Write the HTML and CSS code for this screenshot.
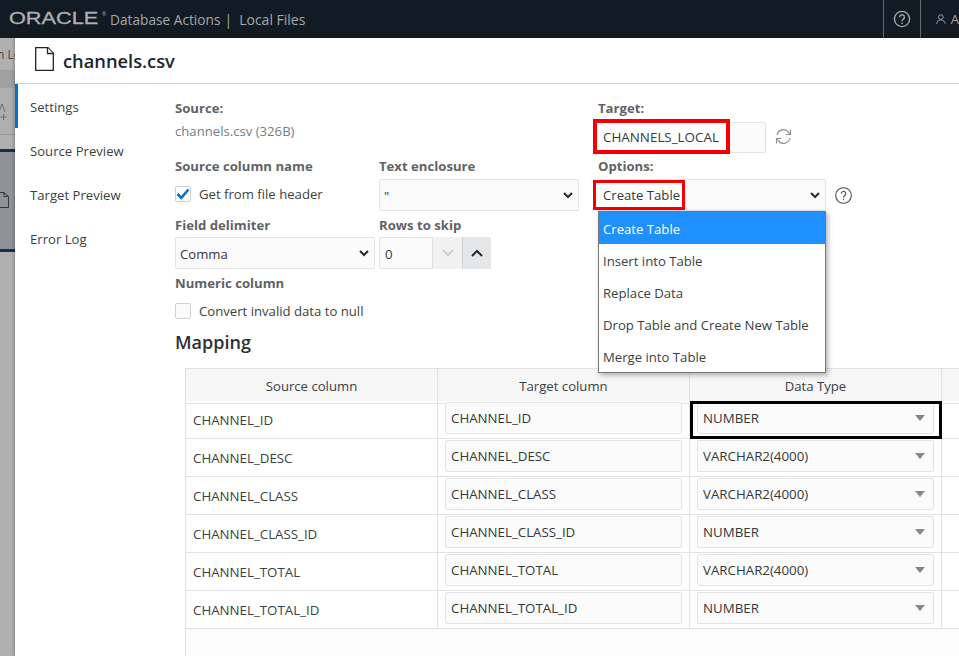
FILE: index.html
```html
<!DOCTYPE html>
<html lang="en">
<head>
<meta charset="utf-8">
<title>Database Actions | Local Files</title>
<link rel="stylesheet" href="styles.css">
</head>
<body>
<header class="topbar">
  <div class="brand">
    <span class="logo">ORACLE</span><span class="reg">®</span>
    <span class="app">Database Actions</span><span class="sep">|</span><span class="app app-last">Local Files</span>
  </div>
  <div class="top-actions">
    <div class="top-btn help-btn">
      <svg width="18" height="18" viewBox="0 0 18 18" fill="none" stroke="#a5a8ab" stroke-width="1.4"><circle cx="9" cy="9" r="7.6"/><path d="M6.6 7.2a2.4 2.4 0 1 1 3.7 2c-.9.6-1.3 1-1.3 2"/><path d="M9 12.6v1.3"/></svg>
    </div>
    <div class="top-btn user-btn">
      <svg width="15" height="16" viewBox="0 0 15 16" fill="none" stroke="#a5a8ab" stroke-width="1.4"><circle cx="7.500" cy="5" r="3.600"/><path d="M1 15.500c.3-3.600 2.400-6 6.500-6s6.200 2.400 6.500 6"/></svg>
      <span class="user-name">A</span>
    </div>
  </div>
</header>
<div class="stage">
  <aside class="backdrop">
    <div class="bd-crumb">n Lo</div>
    <div class="bd-band"></div>
    <div class="bd-tool"><svg width="15" height="18" viewBox="0 0 15 18" fill="none" stroke="#6e6e6e" stroke-width="1"><path d="M-1 9 2 1l3 8"/><path d="M3.500 11v6M.5 14h6"/></svg></div>
    <div class="bd-gap"></div>
    <div class="bd-blue"><svg width="10" height="16" viewBox="0 0 10 16" fill="none" stroke="#33373a" stroke-width="1"><path d="M-3 .5h7l4.500 4v11h-11.500"/><path d="M4 .5v4h4.500"/></svg></div>
    <div class="bd-rest"></div>
  </aside>
  <main class="panel">
    <div class="panel-head">
      <svg class="file-icon" width="19" height="24" viewBox="0 0 19 24" fill="#fff" stroke="#20262b" stroke-width="1.300"><path d="M.7.7h12.300l5.300 5.300V23.300H.7z"/><path d="M12.500.7v5.800h5.800"/></svg>
      <h1 class="file-name">channels.csv</h1>
    </div>
    <div class="panel-body">
      <nav class="side-nav">
        <a class="nav-item active">Settings</a>
        <a class="nav-item">Source Preview</a>
        <a class="nav-item">Target Preview</a>
        <a class="nav-item">Error Log</a>
      </nav>
      <section class="content">
        <div class="form-area">
          <div class="form-left">
            <div class="block-source">
              <div class="label">Source:</div>
              <div class="muted">channels.csv (326B)</div>
            </div>
            <div class="field-grid">
              <div class="field">
                <div class="label">Source column name</div>
                <label class="check-row"><span class="check on"><svg width="14" height="12" viewBox="0 0 14 12" fill="none" stroke="#0572ce" stroke-width="2.600"><path d="M1.500 6l3.800 3.800L12.500 1.500"/></svg></span>Get from file header</label>
              </div>
              <div class="field">
                <div class="label">Text enclosure</div>
                <div class="control select-box enclosure"><span>"</span><svg class="chev" width="10" height="7" viewBox="0 0 10 7" fill="none" stroke="#26292c" stroke-width="2"><path d="M1 1l4 4 4-4"/></svg></div>
              </div>
              <div class="field">
                <div class="label">Field delimiter</div>
                <div class="control select-box"><span>Comma</span><svg class="chev" width="10" height="7" viewBox="0 0 10 7" fill="none" stroke="#26292c" stroke-width="2"><path d="M1 1l4 4 4-4"/></svg></div>
              </div>
              <div class="field">
                <div class="label">Rows to skip</div>
                <div class="stepper">
                  <div class="control step-input">0</div>
                  <div class="step-btn dim"><svg width="12" height="8" viewBox="0 0 12 8" fill="none" stroke="#ccced0" stroke-width="2"><path d="M1 1l5 5 5-5"/></svg></div>
                  <div class="step-btn"><svg width="12" height="8" viewBox="0 0 12 8" fill="none" stroke="#26292c" stroke-width="2"><path d="M1 7l5-5 5 5"/></svg></div>
                </div>
              </div>
              <div class="field wide">
                <div class="label">Numeric column</div>
                <label class="check-row"><span class="check"></span>Convert invalid data to null</label>
              </div>
            </div>
          </div>
          <div class="form-right">
            <div class="label">Target:</div>
            <div class="target-row">
              <div class="control target-input"><span class="mark mark-target">CHANNELS_LOCAL</span></div>
              <svg class="refresh" width="17" height="17" viewBox="0 0 17 17" fill="none" stroke="#8b9094" stroke-width="1.200"><path d="M2 7a6.600 6.600 0 0 1 11.500-3l1.500 2"/><path d="M15.500 1.500V6.500h-4.800"/><path d="M15 10a6.600 6.600 0 0 1-11.500 3L2 11"/><path d="M1.500 15.500v-5h4.800"/></svg>
            </div>
            <div class="label options-label">Options:</div>
            <div class="options-row">
              <div class="control options-select"><span class="mark mark-option">Create Table</span><svg class="chev" width="10" height="7" viewBox="0 0 10 7" fill="none" stroke="#26292c" stroke-width="2"><path d="M1 1l4 4 4-4"/></svg></div>
              <svg width="17" height="17" viewBox="0 0 17 17" fill="none" stroke="#4c5155" stroke-width="1.100"><circle cx="8.500" cy="8.500" r="7.800"/><path d="M6.200 6.800a2.300 2.300 0 1 1 3.500 1.900c-.9.600-1.200 1-1.200 2"/><path d="M8.500 11.800v1.400"/></svg>
            </div>
            <ul class="dropdown">
              <li class="selected">Create Table</li>
              <li>Insert into Table</li>
              <li>Replace Data</li>
              <li>Drop Table and Create New Table</li>
              <li>Merge into Table</li>
            </ul>
          </div>
        </div>
        <h2 class="mapping">Mapping</h2>
        <div class="grid">
          <div class="row head"><div class="cell">Source column</div><div class="cell">Target column</div><div class="cell">Data Type</div><div class="cell"></div></div>
          <div class="row">
            <div class="cell name">CHANNEL_ID</div>
            <div class="cell"><div class="control txt">CHANNEL_ID</div></div>
            <div class="cell focus"><div class="control dd">NUMBER<i class="tri"></i></div></div>
            <div class="cell"></div>
          </div>
          <div class="row">
            <div class="cell name">CHANNEL_DESC</div>
            <div class="cell"><div class="control txt">CHANNEL_DESC</div></div>
            <div class="cell"><div class="control dd">VARCHAR2(4000)<i class="tri"></i></div></div>
            <div class="cell"></div>
          </div>
          <div class="row">
            <div class="cell name">CHANNEL_CLASS</div>
            <div class="cell"><div class="control txt">CHANNEL_CLASS</div></div>
            <div class="cell"><div class="control dd">VARCHAR2(4000)<i class="tri"></i></div></div>
            <div class="cell"></div>
          </div>
          <div class="row">
            <div class="cell name">CHANNEL_CLASS_ID</div>
            <div class="cell"><div class="control txt">CHANNEL_CLASS_ID</div></div>
            <div class="cell"><div class="control dd">NUMBER<i class="tri"></i></div></div>
            <div class="cell"></div>
          </div>
          <div class="row">
            <div class="cell name">CHANNEL_TOTAL</div>
            <div class="cell"><div class="control txt">CHANNEL_TOTAL</div></div>
            <div class="cell"><div class="control dd">VARCHAR2(4000)<i class="tri"></i></div></div>
            <div class="cell"></div>
          </div>
          <div class="row">
            <div class="cell name">CHANNEL_TOTAL_ID</div>
            <div class="cell"><div class="control txt">CHANNEL_TOTAL_ID</div></div>
            <div class="cell"><div class="control dd">NUMBER<i class="tri"></i></div></div>
            <div class="cell"></div>
          </div>
          <div class="grid-fill"></div>
        </div>
      </section>
    </div>
  </main>
</div>
</body>
</html>
```
FILE: styles.css
```css
* { box-sizing: border-box; }
html, body { margin: 0; height: 100%; overflow: hidden; }
body {
  width: 959px; height: 656px;
  font-family: "Open Sans", "Noto Sans", sans-serif;
  font-size: 13.150px; color: #2f3337; background: #fff;
  display: flex; flex-direction: column;
}
.topbar {
  height: 38px; flex: none; background: #121a23;
  display: flex; justify-content: space-between; align-items: stretch;
  color: #a5a8ab;
}
.brand { display: flex; align-items: center; padding-left: 9px; }
.logo {
  font-family: "Liberation Sans", sans-serif; font-size: 16.700px;
  -webkit-text-stroke: .3px #aeb0b2;
  transform: scaleX(1.300); transform-origin: left center; width: 94px; color: #aeb0b2;
}
.reg { font-size: 5px; margin: -10px 0 0 -1px; width: 5px; }
.app { font-size: 13.700px; margin-left: 3px; }
.sep { font-size: 14px; margin: 0 0 0 4px; }
.app-last { margin-left: 7px; font-size: 14px; }
.top-actions { display: flex; width: 76px; flex: none; overflow: hidden; }
.top-btn { border-left: 1px solid #62676c; display: flex; align-items: center; flex: none; }
.help-btn { width: 37px; justify-content: center; padding-right: 1px; }
.user-btn { width: 39px; padding-left: 15px; gap: 5px; font-size: 13px; }
.user-name { color: #a5a8ab; }
.stage { flex: 1; display: flex; min-height: 0; }
.backdrop {
  width: 15px; flex: none; background: #b0b0b0; overflow: hidden;
  display: flex; flex-direction: column; color: #4a4643; font-size: 12px;
}
.bd-crumb { height: 32px; flex: none; padding-top: 8px; white-space: nowrap; text-indent: -3px; }
.bd-band { height: 18px; flex: none; background: #a0a0a0; }
.bd-tool { height: 47px; flex: none; background: #aeaeae; border-bottom: 1px solid #999; padding-top: 15px; display: flex; }
.bd-gap { height: 14px; flex: none; }
.bd-blue { height: 103px; flex: none; background: #8d9398; border-top: 3px solid #14324a; border-bottom: 3px solid #14324a; padding-top: 40px; display: flex; align-items: flex-start; }
.bd-rest { flex: 1; }
.panel { flex: 1; min-width: 0; display: flex; flex-direction: column; background: #fff; box-shadow: -1px 0 3px rgba(0,0,0,.25); }
.panel-head {
  height: 46px; flex: none; border-bottom: 1px solid #cfcfcf;
  display: flex; align-items: center; padding: 0 0 0 20px; gap: 9px;
}
.file-icon { margin-top: -4px; }
.file-name { margin: 0; font-size: 18.300px; font-weight: 600; color: #20262b; }
.panel-body { flex: 1; display: flex; min-height: 0; }
.side-nav { width: 160px; flex: none; display: flex; flex-direction: column; }
.nav-item { height: 44px; padding: 14px 0 0 15px; line-height: 18px; color: #3a3f44; }
.nav-item.active { border-left: 3px solid #0572ce; padding-left: 12px; }
.content { flex: 1; min-width: 0; display: flex; flex-direction: column; overflow: hidden; }
.form-area { display: flex; height: 245px; flex: none; }
.form-left { width: 423px; flex: none; padding-top: 15px; }
.label { font-weight: 700; line-height: 18px; color: #5f6367; }
.muted { color: #6f8088; line-height: 18px; margin-top: 5px; }
.block-source { height: 58px; }
.field-grid { display: grid; grid-template-columns: 204px 200px; }
.field { height: 58px; }
.field:nth-child(-n+2) { height: 59px; }
.wide { grid-column: 1 / -1; }
.check-row { display: flex; align-items: center; gap: 8px; height: 31px; margin-top: 3px; color: #3a3f44; }
.check { width: 16px; height: 16px; border: 1px solid #cfd0d1; border-radius: 2px; background: #fcfcfc; display: flex; align-items: center; justify-content: center; flex: none; }
.control { border: 1px solid #e4e4e4; border-radius: 2px; background: #fbfbfb; color: #33383c; display: flex; align-items: center; white-space: nowrap; }
.select-box { width: 200px; height: 32px; padding: 0 5px 0 4px; justify-content: space-between; margin-top: 3px; }
.select-box span { padding-top: 2px; }
.enclosure { margin-top: 4px; }
.stepper { display: flex; height: 32px; margin-top: 3px; width: 112px; }
.step-input { width: 53px; padding: 2px 0 0 5px; height: 32px; border-right: none; border-radius: 2px 0 0 2px; }
.step-btn { width: 30px; height: 32px; background: #f1f1f1; display: flex; align-items: center; justify-content: center; border-left: 1px solid #e0e0e0; }
.step-btn:last-child { width: 29px; background: #e4e6e8; border-left-color: #cfd2d4; }
.form-right { position: relative; padding-top: 15px; width: 280px; }
.target-row { display: flex; align-items: center; gap: 9px; margin-top: 4px; height: 32px; }
.target-input { width: 168px; height: 31px; }
.refresh { margin-top: -2px; }
.mark { outline: 4px solid #f50000; outline-offset: -4px; display: flex; align-items: center; }
.mark-target { width: 137px; height: 35px; margin: -1px 0 0 -6px; padding: 1px 0 0 10px; background: #fff; flex: none; font-size: 13.400px; }
.options-label { margin-top: 4px; }
.options-row { display: flex; align-items: center; gap: 9px; margin-top: 4px; height: 32px; }
.options-select { width: 228px; height: 32px; justify-content: space-between; padding-right: 5px; }
.mark-option { width: 92px; height: 30px; margin-left: -6px; padding-left: 10px; background: #fff; flex: none; outline-width: 3px; outline-offset: -3px; }
.dropdown {
  position: absolute; left: 0; top: 127px; width: 228px; margin: 0; padding: 0; list-style: none;
  background: #fff; border: 1px solid #777; box-shadow: 2px 2px 5px rgba(0,0,0,.3); z-index: 5;
}
.dropdown li { height: 32px; line-height: 34px; padding-left: 4px; color: #3a3f44; }
.dropdown .selected { background: #1e90ff; color: #fff; }
.mapping { margin: 0; font-size: 18px; font-weight: 600; line-height: 25px; color: #2c3135; flex: none; padding-top: 1px; }
.grid { margin: 13px 0 0 10px; border: 1px solid #e2e2e2; border-width: 1px 0 0 1px; background: #fcfcfc; flex: 1; width: 800px; display: flex; flex-direction: column; }
.row { display: grid; grid-template-columns: 252px 252px 252px 1fr; height: 38px; background: #fff; flex: none; }
.row.head { height: 32px; background: #f6f6f6; text-align: center; }
.row.head .cell { padding: 0; display: block; line-height: 34px; color: #3a3f44; font-size: 13.150px; }
.cell { border-right: 1px solid #e2e2e2; border-bottom: 1px solid #e2e2e2; padding: 1px 7px 0; font-size: 13.300px; position: relative; min-width: 0; color: #3a3f44; }
.cell:last-child { border-right: 0; }
.cell.name { padding: 8px 7px 0; line-height: 22px; }
.txt { height: 32px; padding-left: 5px; }
.dd { height: 32px; padding: 0 8px 0 5px; justify-content: space-between; }
.tri { width: 0; height: 0; border-left: 5px solid transparent; border-right: 5px solid transparent; border-top: 6px solid #85888b; }
.focus { outline: 3px solid #000; outline-offset: -3px; }
.grid-fill { flex: 1; }
```
